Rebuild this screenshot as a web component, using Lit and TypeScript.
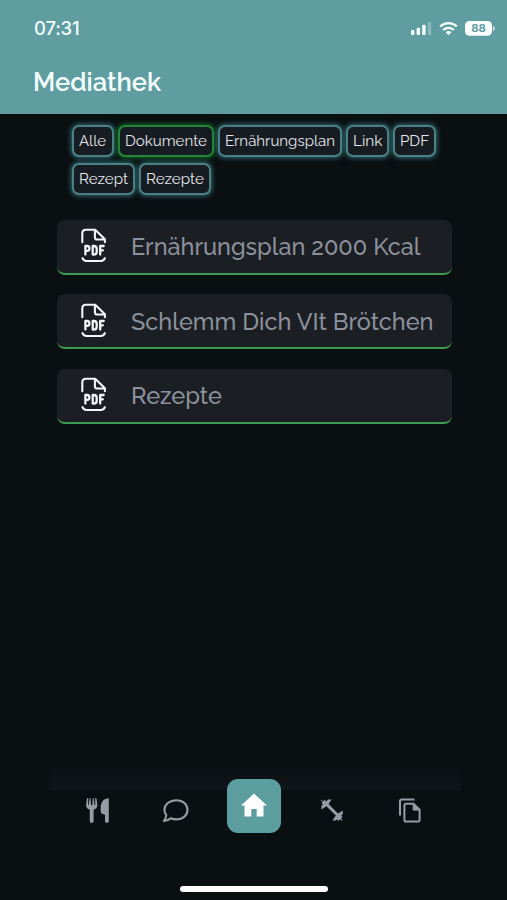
import { LitElement, html, css, TemplateResult } from "lit";
import { customElement, property } from "lit/decorators.js";
import { classMap } from "lit/directives/class-map.js";

/** One line of text fitted to a given width. */
@customElement("fit-text")
class FitText extends LitElement {
  @property() text = "";
  @property({ type: Number }) width = 100;
  @property({ type: Number }) height = 20;
  @property({ type: Number }) baseline = 15;

  static styles = css`
    :host { display: block; flex: none; }
    svg { display: block; overflow: visible; }
  `;

  render() {
    return html`<svg width=${this.width} height=${this.height}>
      <text x="0" y=${this.baseline} fill="currentColor" textLength=${this.width} lengthAdjust="spacingAndGlyphs">${this.text}</text>
    </svg>`;
  }
}

@customElement("media-header")
class MediaHeader extends LitElement {
  static styles = css`
    :host { display: block; height: 114px; background: #5f9da0; color: #f3ffff; box-sizing: border-box; }
    .status { display: flex; justify-content: space-between; height: 57px; padding: 0 12px 0 34px; }
    .time { font: 500 18.5px/57px Inter, sans-serif; letter-spacing: -0.2px; }
    .icons { margin-top: 20px; }
    .level { font: 700 11px Inter, sans-serif; }
    .title { padding: 6px 0 0 33px; font: 600 26px Raleway, Lato, sans-serif; }
  `;

  render() {
    return html`
      <div class="status">
        <div class="time">07:31</div>
        <svg class="icons" width="85" height="18" viewBox="410 20 85 18">
          <g fill="#f3ffff">
            <rect x="411" y="30" width="3.4" height="5" rx="1" />
            <rect x="416.6" y="27.7" width="3.4" height="7.3" rx="1" />
            <rect x="422.2" y="24.7" width="3.4" height="10.3" rx="1" />
            <rect x="427.8" y="22" width="3.4" height="13" rx="1" opacity=".3" />
            <path d="M448.5 35.3l-2.9-3a4.2 4.2 0 0 1 5.8 0z" />
          </g>
          <g fill="none" stroke="#f3ffff" stroke-width="2.3">
            <path d="M440.2 26.5a12 12 0 0 1 16.6 0M443.2 30a7.6 7.6 0 0 1 10.6 0" />
          </g>
          <rect x="465" y="21" width="27" height="14.7" rx="4.5" fill="#fbffff" />
          <path d="M493 26v5q1.8-.5 1.8-2.5t-1.8-2.5z" fill="#d5e8e8" />
          <text class="level" x="471.2" y="32.4" textLength="14.6" lengthAdjust="spacingAndGlyphs" fill="#5f9da0">88</text>
        </svg>
      </div>
      <div class="title"><fit-text text="Mediathek" .width=${128} .height=${34} .baseline=${28}></fit-text></div>
    `;
  }
}

const pdfIcon = html`<svg width="28" height="36" viewBox="0.3 0.8 28 36" fill="none" stroke="#f4f5f7" stroke-width="2.1" stroke-linecap="round" stroke-linejoin="round">
  <path d="M2.6 15V6.2Q2.6 2.6 6.2 2.6H15.5L25.2 12V15M15.2 3V10Q15.2 12.3 17.5 12.3H25" />
  <path d="M2.8 31Q3.8 33.8 6.7 33.8H21.2Q24.2 33.8 25.2 31" />
  <g stroke-width="2.3">
    <path d="M5.7 27.4V18.8H7.6Q9.7 18.8 9.7 21.2T7.6 23.6H5.7" />
    <path d="M13 18.8V27.4H14.2Q17 27.4 17 24.6V21.6Q17 18.8 14.2 18.8Z" />
    <path d="M20.5 27.4V18.8H24M20.5 23.1H23.2" />
  </g>
</svg>`;

interface Chip { text: string; width: number; box: number; active?: boolean; }

@customElement("filter-chips")
class FilterChips extends LitElement {
  static styles = css`
    :host { display: flex; flex-wrap: wrap; gap: 6px 4px; padding: 10.6px 60px 0 71.6px; }
    .chip {
      box-sizing: border-box; height: 32px; display: flex; align-items: center; padding-left: 5px;
      border: 2px solid #4b8084; border-radius: 7px; background: #171c22; color: #e3e5e8;
      box-shadow: 0 0 5px 1px #2f6b6f; font: 400 15px Raleway, Lato, sans-serif;
    }
    .active { border-color: #238537; box-shadow: 0 0 5px 1px #126a24; }
  `;

  chips: Chip[] = [
    { text: "Alle", width: 27, box: 42 },
    { text: "Dokumente", width: 82, box: 96, active: true },
    { text: "Ernährungsplan", width: 110, box: 124 },
    { text: "Link", width: 29.5, box: 43 },
    { text: "PDF", width: 29, box: 43 },
    { text: "Rezept", width: 49, box: 63 },
    { text: "Rezepte", width: 58, box: 72 },
  ];

  render() {
    return this.chips.map((c) => html`
      <div class=${classMap({ chip: true, active: !!c.active })} style="width:${c.box}px">
        <fit-text .text=${c.text} .width=${c.width} .height=${20} .baseline=${15}></fit-text>
      </div>`);
  }
}

@customElement("media-list")
class MediaList extends LitElement {
  static styles = css`
    :host { display: flex; flex-direction: column; gap: 19.6px; padding: 25.1px 55.4px 0 56.6px; }
    .card {
      box-sizing: border-box; height: 55px; display: flex; align-items: center; padding-left: 23px; gap: 23px;
      background: #1b1e23; border-radius: 8px; border-bottom: 2px solid #3e9c52; color: #8b919c;
      font: 500 23.6px Raleway, Lato, sans-serif;
    }
    .card svg { flex: none; }
  `;

  items = [
    { text: "Ernährungsplan 2000 Kcal", width: 289.5 },
    { text: "Schlemm Dich VIt Brötchen", width: 302.5 },
    { text: "Rezepte", width: 91 },
  ];

  render() {
    return this.items.map((i) => html`
      <div class="card">${pdfIcon}<fit-text .text=${i.text} .width=${i.width} .height=${30} .baseline=${23.6}></fit-text></div>`);
  }
}

@customElement("tab-bar")
class TabBar extends LitElement {
  static styles = css`
    :host { display: block; height: 134px; }
    .shade { height: 23.5px; margin: 0 46px 0 49px; background: linear-gradient(#0a0f12, #10161b); }
    .tabs { display: grid; grid-template-columns: repeat(5, 78px); justify-content: center; height: 96.5px; }
    .tab { display: flex; justify-content: center; padding-top: 5.5px; color: #979ba3; }
    .home { box-sizing: border-box; width: 54px; height: 54px; margin: -11px auto 0; display: flex; align-items: center; justify-content: center; border-radius: 11px; background: #5c9da0; }
    .indicator { width: 148px; height: 6px; margin: 0 auto; border-radius: 3px; background: #fff; }
  `;

  tab(icon: TemplateResult) {
    return html`<div class="tab">${icon}</div>`;
  }

  render() {
    return html`
      <div class="shade"></div>
      <div class="tabs">
        ${this.tab(html`<svg width="30" height="30" viewBox="0 0 30 30" fill="currentColor">
          <path d="M4.2 3Q3.1 7.5 3.1 10.5Q3.3 13.7 6.8 14.8V26Q6.8 28 8.7 28T10.6 26V14.8Q14.1 13.7 14.3 10.5Q14.3 7.5 13.3 3H12.2V10.2H11.6L10.7 3H9.9L9.3 10.2H8.1L7.5 3H6.6L5.8 10.2H5.2V3Z" />
          <path d="M25.8 3.2Q19.2 3.2 17.7 10.5V16Q17.7 19 20.5 19.3L22 19.8V26Q22 28 23.9 28T25.8 26Z" />
        </svg>`)}
        ${this.tab(html`<svg width="30" height="30" viewBox="0.5 0 30 30" fill="none" stroke="currentColor" stroke-width="2.1" stroke-linejoin="round">
          <path d="M16 5.2C22.5 5.2 27 9.4 27 14.8S22.5 24.4 16 24.4Q12.8 24.4 10.2 23.2Q7.4 25.8 3.4 25.9Q5.5 23.7 5.8 20Q3.9 17.8 3.9 14.8C3.9 9.4 9 5.2 16 5.2Z" />
        </svg>`)}
        <div class="home"><svg width="28" height="27" viewBox="0 0.5 28 27"><path d="M14 2L27 14H23.5V25H16.7V17.5H11.3V25H4.5V14H1L14 2Z" fill="#fff" /></svg></div>
        ${this.tab(html`<svg width="30" height="30" viewBox="0 0 30 30" fill="currentColor">
          <path d="M4.2 4.6L6 6.4L7.6 4.8L9.2 6.4L11 4.6H14.6L11.6 9L21 18.4L25.8 15.4V19L24.2 20.4L25.6 22L24 23.6L25.6 25L24.8 25.8L23.2 24.2L21.4 25.8L20 24.4L18.8 25.6H15.4L18.8 20.6L9.4 11.2L4.4 14.6V10.8L6 9.4L4.6 8L5.6 6.8L3.6 5.2Z" />
        </svg>`)}
        ${this.tab(html`<svg width="30" height="30" viewBox="0 0 30 30" fill="none" stroke="currentColor" stroke-width="2" stroke-linejoin="round">
          <path d="M5 20.5V6Q5 4.4 6.6 4.4H19.5" />
          <path d="M11 8.8H18.5L24.6 14.8V25.2Q24.6 26.6 23.2 26.6H11Q9.4 26.6 9.4 25.2V10.4Q9.4 8.8 11 8.8Z" />
          <path d="M18.2 8.8V15.1H24.6Z" fill="currentColor" stroke-width="1" />
        </svg>`)}
      </div>
      <div class="indicator"></div>
    `;
  }
}

@customElement("app-root")
class AppRoot extends LitElement {
  static styles = css`
    :host { display: flex; flex-direction: column; height: 900px; background: #0a0f12; overflow: hidden; }
    tab-bar { margin-top: auto; }
  `;

  render() {
    return html`
      <media-header></media-header>
      <filter-chips></filter-chips>
      <media-list></media-list>
      <tab-bar></tab-bar>
    `;
  }
}
